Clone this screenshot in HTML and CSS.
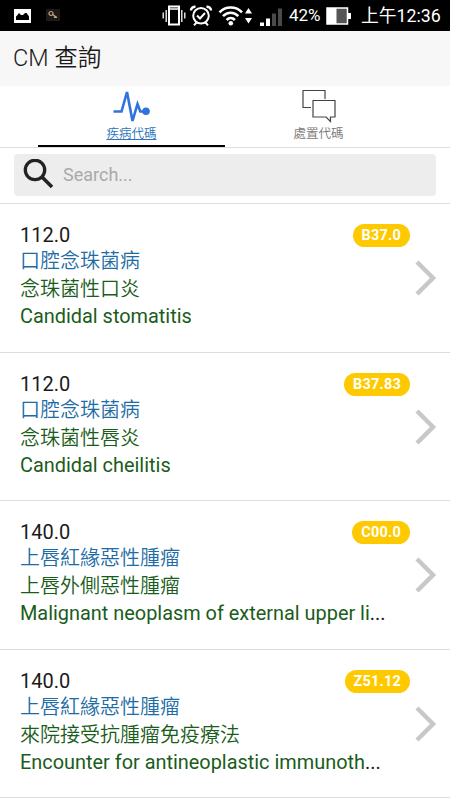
FILE: index.html
```
<!DOCTYPE html>
<html lang="zh-Hant">
<head>
    <meta charset="UTF-8">
    <meta name="viewport" content="width=device-width, initial-scale=1.0">
    <title>CM 查詢</title>
    <link rel="stylesheet" href="styles.css">
</head>
<body>
    <div class="status-bar">
        <svg class="picture-icon" width="17" height="14" viewBox="0 0 17 14">
            <rect width="17" height="14" fill="#fff"/>
            <path d="M2 11V7.500L3.500 6l1.500-2 2 2h2l2-2 1.500 0 1.500 2 1 1.500V11z" fill="#000"/>
        </svg>
        <svg class="key-icon" width="14" height="12" viewBox="0 0 14 12">
            <rect width="14" height="12" fill="#1c1917"/>
            <circle cx="5" cy="4.500" r="2" fill="none" stroke="#c4a78c" stroke-width="1.200"/>
            <path d="M6.500 5.500L11 8.500M9 7.300l-1 1.200" fill="none" stroke="#c4a78c" stroke-width="1.200"/>
        </svg>
        <div class="status-right">
            <svg width="155" height="31" viewBox="0 0 155 31">
                <!-- vibrate -->
                <g fill="none" stroke="#fff">
                    <rect x="20" y="6.500" width="10" height="18" stroke-width="2"/>
                    <path d="M20 9h10M17.200 10v12M14.200 12.500v6M32.800 10v12M35.800 12.500v6" stroke-width="1.300"/>
                </g>
                <!-- alarm -->
                <g fill="none" stroke="#fff" stroke-width="2">
                    <circle cx="52" cy="15.800" r="7.800"/>
                    <path d="M48 15.500l3 3 5-5.500M47.500 22.500l-2.500 2.800M56.500 22.500l2.500 2.800"/>
                    <path d="M42 10.500c0-2.500 2.500-4 4.500-3.800M62 10.500c0-2.500-2.500-4-4.500-3.800" stroke-width="2.500"/>
                </g>
                <!-- wifi -->
                <g fill="none" stroke="#fff" stroke-width="2.600">
                    <path d="M70.500 12.300c6-6.500 16.500-6.500 22.500 0M74 16.200c4.300-4.600 11-4.600 15.300 0M77.600 20c2.500-2.700 5.800-2.700 8.300 0"/>
                </g>
                <circle cx="81.800" cy="23.300" r="2.300" fill="#fff"/>
                <path d="M96 13.500l3.500-5.500 3.500 5.500zM96 18h7l-3.500 5.500z" fill="#fff"/>
                <!-- signal -->
                <path d="M111 22.500h4v3.500h-4zM117 18.500h4V26h-4z" fill="#fff"/>
                <path d="M123 13.500h4V26h-4zM129 8.500h4V26h-4z" fill="#4a4a4a"/>
            </svg>
            <span class="battery-level">42%</span>
            <svg class="battery-icon" width="26" height="18" viewBox="0 0 26 18">
                <rect x="1" y="1" width="20.500" height="16" fill="#555" stroke="#fff" stroke-width="1.500"/>
                <path d="M1 1h9.500v16H1zM22 6h3v6h-3z" fill="#fff"/>
            </svg>
            <span class="time">上午12:36</span>
        </div>
    </div>

    <header>
        <h1>CM 查詢</h1>
    </header>

    <nav class="tabs">
        <a class="tab active">
            <svg width="40" height="34" viewBox="0 0 40 34">
                <path d="M1.500 22.500H9.500L15 3l5.500 29L25.500 15l2.800 7.500H34" fill="none" stroke="#2f74dc" stroke-width="2.600"/>
                <circle cx="34" cy="22.300" r="3.800" fill="#2f74dc"/>
            </svg>
            <span>疾病代碼</span>
        </a>
        <a class="tab">
            <svg width="34" height="34" viewBox="0 0 34 34">
                <path d="M9 18.500H1V1.500H23V10M11 11.500H33V28H28.500V32.500L24 28H11z" fill="none" stroke="#444" stroke-width="1.200"/>
            </svg>
            <span>處置代碼</span>
        </a>
    </nav>

    <div class="search">
        <div class="search-box">
            <svg width="32" height="32" viewBox="0 0 32 32">
                <circle cx="12" cy="11" r="9.700" fill="none" stroke="#222" stroke-width="3.300"/>
                <path d="M19 18l10 10" stroke="#222" stroke-width="3.600"/>
            </svg>
            <input type="text" placeholder="Search...">
        </div>
    </div>

    <ul class="results">
        <li class="item">
            <div class="names">
                <p class="code">112.0</p>
                <p class="group">口腔念珠菌病</p>
                <p class="chinese">念珠菌性口炎</p>
                <p class="english"><span>Candidal stomatitis</span></p>
            </div>
            <span class="badge">B37.0</span>
            <svg class="arrow" width="22" height="36" viewBox="0 0 22 36">
                <path d="M2 2l16 16L2 34"/>
            </svg>
        </li>
        <li class="item">
            <div class="names">
                <p class="code">112.0</p>
                <p class="group">口腔念珠菌病</p>
                <p class="chinese">念珠菌性唇炎</p>
                <p class="english"><span>Candidal cheilitis</span></p>
            </div>
            <span class="badge">B37.83</span>
            <svg class="arrow" width="22" height="36" viewBox="0 0 22 36">
                <path d="M2 2l16 16L2 34"/>
            </svg>
        </li>
        <li class="item">
            <div class="names">
                <p class="code">140.0</p>
                <p class="group">上唇紅緣惡性腫瘤</p>
                <p class="chinese">上唇外側惡性腫瘤</p>
                <p class="english"><span>Malignant neoplasm of external upper li</span>...</p>
            </div>
            <span class="badge">C00.0</span>
            <svg class="arrow" width="22" height="36" viewBox="0 0 22 36">
                <path d="M2 2l16 16L2 34"/>
            </svg>
        </li>
        <li class="item">
            <div class="names">
                <p class="code">140.0</p>
                <p class="group">上唇紅緣惡性腫瘤</p>
                <p class="chinese">來院接受抗腫瘤免疫療法</p>
                <p class="english"><span>Encounter for antineoplastic immunoth</span>...</p>
            </div>
            <span class="badge">Z51.12</span>
            <svg class="arrow" width="22" height="36" viewBox="0 0 22 36">
                <path d="M2 2l16 16L2 34"/>
            </svg>
        </li>
    </ul>
</body>
</html>
```
FILE: styles.css
```
* {
    box-sizing: border-box;
}

body {
    margin: 0;
    height: 800px;
    overflow: hidden;
    background-color: #fff;
    color: #1a1a1a;
    font-family: Roboto, "Noto Sans CJK TC", sans-serif;
}

h1, p, ul {
    margin: 0;
    padding: 0;
    font-weight: normal;
}

svg {
    display: block;
    flex: none;
}

.status-bar {
    display: flex;
    align-items: center;
    height: 31px;
    padding-left: 14px;
    background-color: #000;
    color: #fff;
}

.key-icon {
    margin: 0 0 2px 15px;
}

.status-right {
    display: flex;
    align-items: center;
    margin-left: auto;
    padding-right: 10px;
    line-height: 31px;
    white-space: nowrap;
}

.battery-level {
    width: 37px;
    margin-left: -15px;
    font-size: 17px;
    line-height: 33px;
}

.battery-icon {
    margin-right: 9px;
}

.time {
    font-size: 17.800px;
    width: 79px;
    line-height: 33px;
}

header {
    height: 55px;
    padding: 0 13px;
    background-color: #f7f7f7;
}

h1 {
    font-size: 23.500px;
    font-weight: 350;
    line-height: 55px;
}

.tabs {
    display: flex;
    height: 62px;
    padding: 0 38px;
    border-bottom: 1px solid #ddd;
}

.tab {
    flex: 1;
    display: flex;
    flex-direction: column;
    align-items: center;
    height: 61px;
    padding-top: 3px;
    font-size: 12.500px;
    font-weight: 350;
    line-height: 21px;
    color: #777;
}

.tab.active {
    border-bottom: 2px solid #000;
    color: #2a72b8;
}

.tab.active span {
    text-decoration: underline;
}

.search {
    height: 56px;
    padding: 6px 14px;
    border-bottom: 1px solid #ddd;
}

.search-box {
    display: flex;
    align-items: center;
    height: 42px;
    padding-left: 9px;
    border-radius: 4px;
    background-color: #ededed;
}

.search-box input {
    flex: 1;
    margin: 0 0 2px 8px;
    padding: 0;
    border: none;
    background: none;
    font-family: inherit;
    font-size: 18px;
}

.search-box input::placeholder {
    color: #a9a9a9;
}

.results {
    list-style: none;
}

.item {
    position: relative;
    height: 148.600px;
    padding: 18px 60px 0 20px;
    border-bottom: 1px solid #ddd;
}

.names p {
    height: 27px;
    font-size: 20px;
    line-height: 27px;
    white-space: nowrap;
}

.names .code {
    height: 26px;
}

.names .group {
    height: 28px;
    font-weight: 350;
    color: #1d6ca5;
}

.names .chinese {
    font-weight: 350;
    color: #1a5c1a;
}

.names .english {
    font-size: 19.900px;
}

.english span {
    color: #1a5c1a;
}

.badge {
    position: absolute;
    top: 20px;
    right: 40px;
    height: 23px;
    padding: 0 9px;
    border-radius: 12px;
    background-color: #ffc900;
    color: #fff;
    font-size: 14.500px;
    font-weight: bold;
    line-height: 23px;
    letter-spacing: 0.200px;
}

.arrow {
    position: absolute;
    top: 56px;
    right: 13px;
}

.arrow path {
    fill: none;
    stroke: #c8c8c8;
    stroke-width: 4.500;
}
```
